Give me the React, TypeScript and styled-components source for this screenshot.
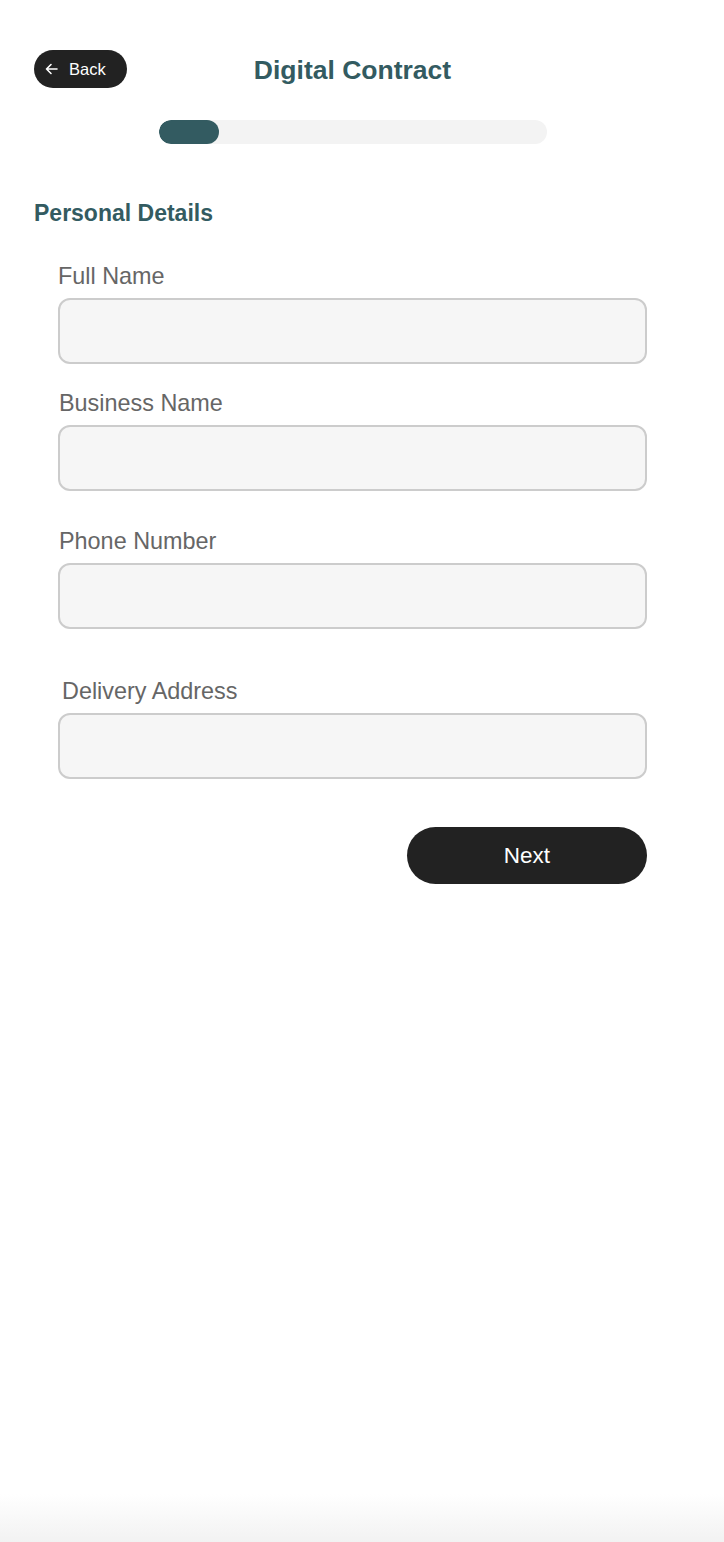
import React from "react";
import styled, { createGlobalStyle } from "styled-components";

const Global = createGlobalStyle`
  html, body { margin: 0; padding: 0; }
  body {
    font-family: "Liberation Sans", Arial, Helvetica, sans-serif;
    background: #ffffff;
  }
  * { box-sizing: border-box; }
`;

const Page = styled.div`
  min-height: 100vh;
  background: linear-gradient(to bottom, #ffffff calc(100% - 48px), #f2f2f2 100%);
`;

const Container = styled.div`
  width: 705px;
  padding: 50px 34px 0;
`;

const Header = styled.div`
  display: grid;
  grid-template-columns: 1fr auto 1fr;
  align-items: center;
  height: 38px;
`;

const BackButton = styled.button`
  justify-self: start;
  display: flex;
  align-items: center;
  gap: 11px;
  width: 93px;
  height: 38px;
  padding: 0 0 0 11px;
  border: none;
  border-radius: 19px;
  background: #222222;
  color: #ffffff;
  font-family: inherit;
  font-size: 16.5px;
  cursor: pointer;
`;

const Title = styled.h1`
  margin: 0;
  font-size: 26.5px;
  font-weight: 700;
  color: #335b61;
  line-height: 1;
  padding-top: 2px;
`;

const Track = styled.div`
  width: 388px;
  height: 24px;
  margin: 32px auto 0;
  background: #f3f3f3;
  border-radius: 12px;
  overflow: hidden;
`;

const Fill = styled.div`
  height: 100%;
  background: #335b61;
  border-radius: 12px;
`;

const SectionTitle = styled.h2`
  margin: 56px 0 0;
  font-size: 23px;
  line-height: 27px;
  font-weight: 700;
  color: #335b61;
`;

const Form = styled.form`
  display: flex;
  flex-direction: column;
  padding: 0 24px;
`;

const Field = styled.div<{ $top: number }>`
  display: flex;
  flex-direction: column;
  margin-top: ${(p) => p.$top}px;
`;

const Label = styled.label<{ $indent: number }>`
  font-size: 23.4px;
  line-height: 27px;
  color: #666666;
  padding-left: ${(p) => p.$indent}px;
  margin-bottom: 7.5px;
`;

const Input = styled.input`
  height: 66px;
  width: 100%;
  border: 2px solid #cccccc;
  border-radius: 12px;
  background: #f6f6f6;
  font-family: inherit;
  font-size: 20px;
  padding: 0 16px;
  outline: none;
`;

const Actions = styled.div`
  display: flex;
  justify-content: flex-end;
  margin-top: 48px;
`;

const NextButton = styled.button`
  width: 240px;
  height: 57px;
  padding-top: 3px;
  border: none;
  border-radius: 28.5px;
  background: #222222;
  color: #ffffff;
  font-family: inherit;
  font-size: 22.5px;
  cursor: pointer;
`;

const fields = [
  { label: "Full Name", top: 36, indent: 0 },
  { label: "Business Name", top: 26.5, indent: 1 },
  { label: "Phone Number", top: 37.5, indent: 1 },
  { label: "Delivery Address", top: 49.5, indent: 4 },
];

export default function App() {
  const progress = 60 / 388;
  return (
    <Page>
      <Global />
      <Container>
        <Header>
          <BackButton type="button">
            <svg width="13" height="12" viewBox="0 0 13 12" fill="none">
              <path
                d="M12 6H1.5M6 1.5L1.5 6L6 10.5"
                stroke="#ffffff"
                strokeWidth="1.6"
                strokeLinecap="round"
                strokeLinejoin="round"
              />
            </svg>
            Back
          </BackButton>
          <Title>Digital Contract</Title>
          <span />
        </Header>
        <Track>
          <Fill style={{ width: `${progress * 100}%` }} />
        </Track>
        <SectionTitle>Personal Details</SectionTitle>
        <Form onSubmit={(e) => e.preventDefault()}>
          {fields.map((f) => (
            <Field key={f.label} $top={f.top}>
              <Label $indent={f.indent}>{f.label}</Label>
              <Input type="text" />
            </Field>
          ))}
          <Actions>
            <NextButton type="submit">Next</NextButton>
          </Actions>
        </Form>
      </Container>
    </Page>
  );
}
